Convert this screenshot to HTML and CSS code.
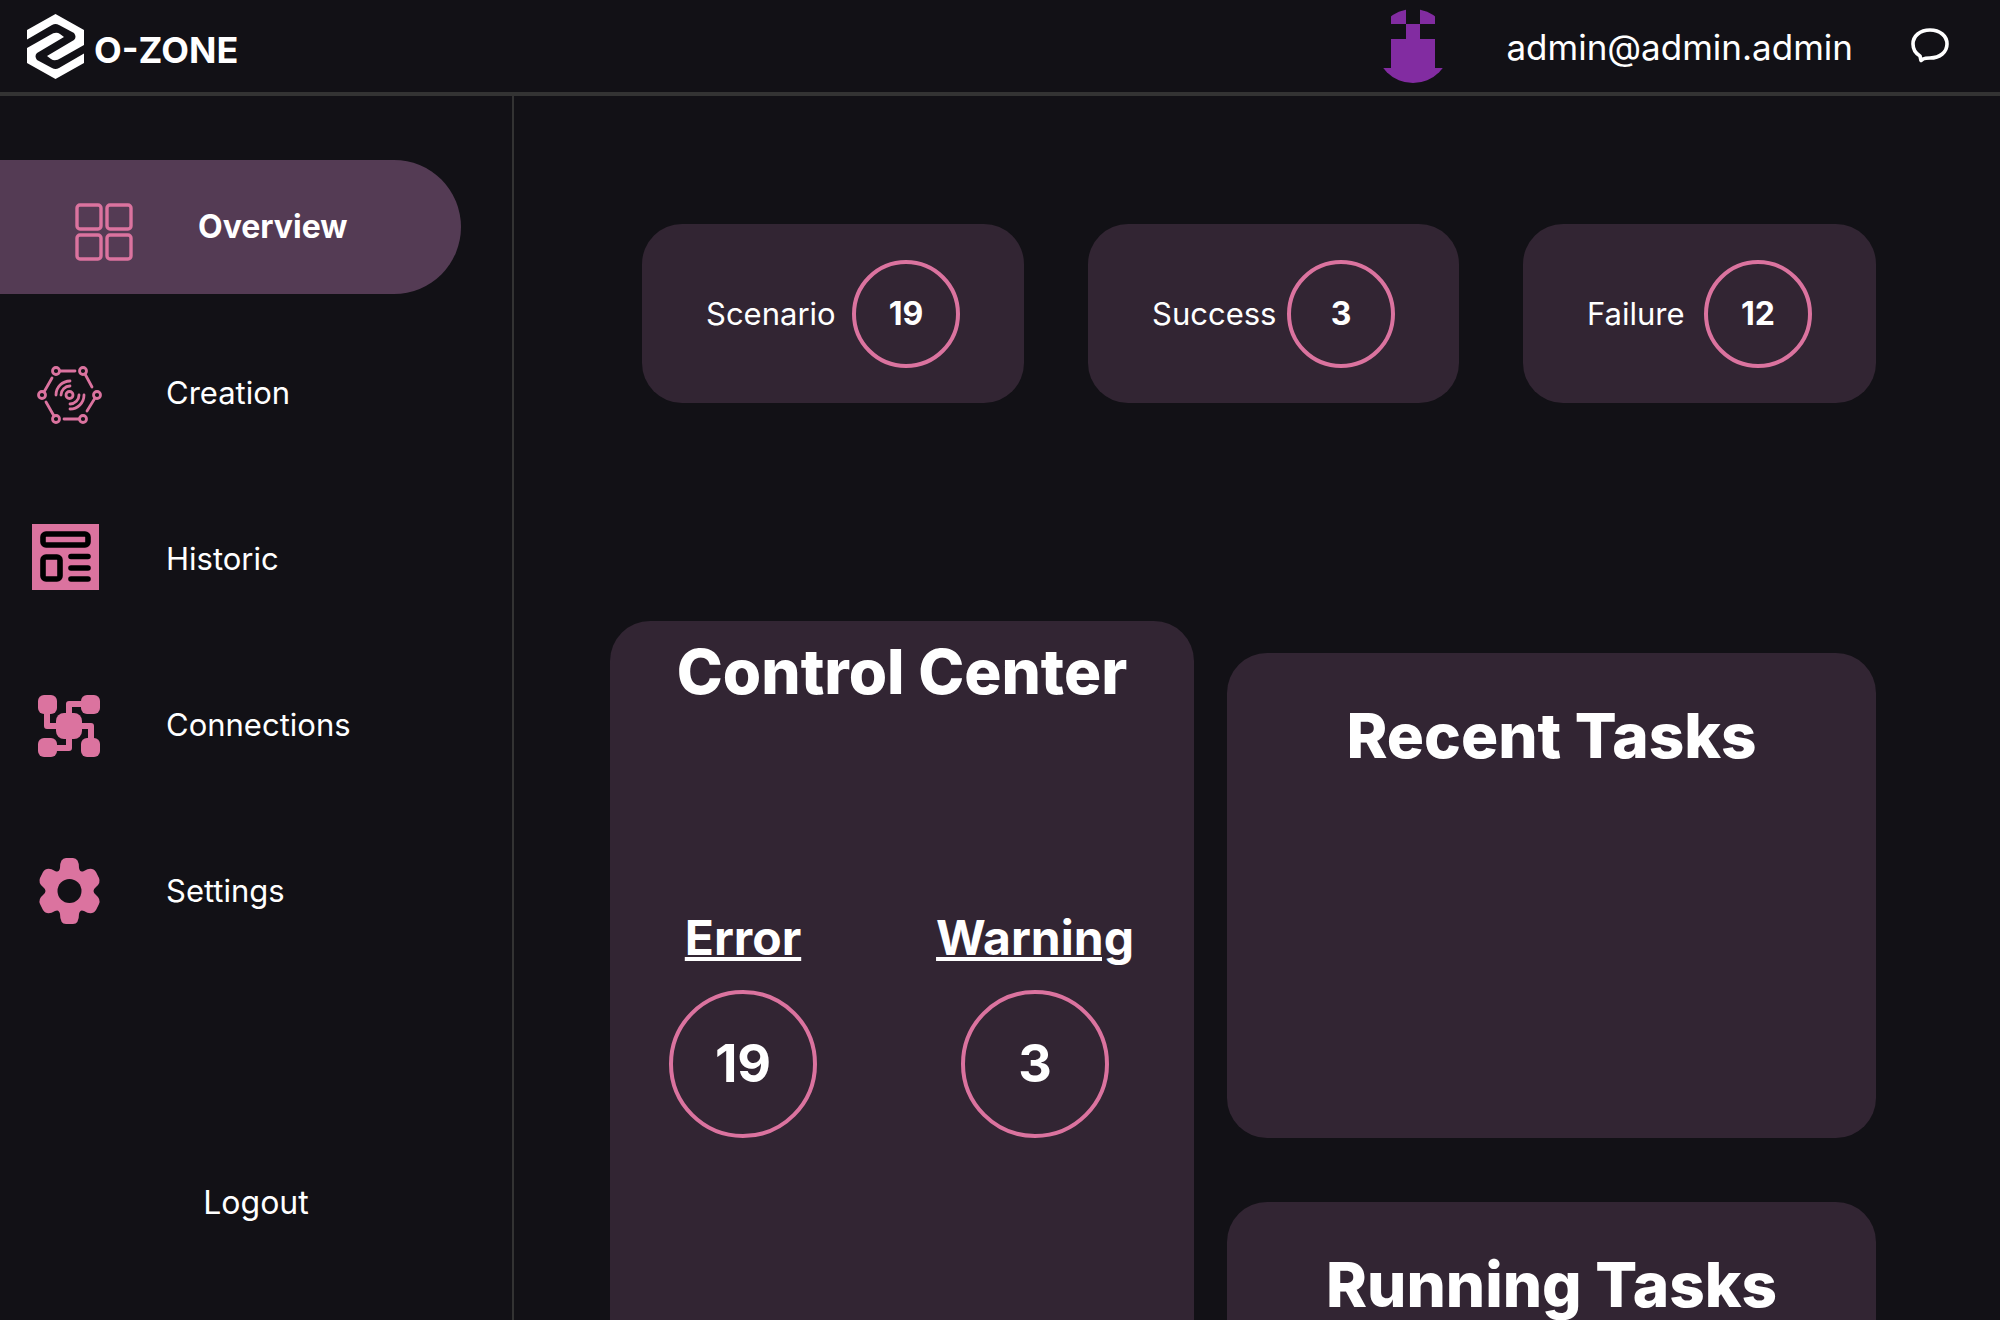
FILE: index.html
```html
<!DOCTYPE html>
<html lang="en">
<head>
<meta charset="utf-8">
<title>O-Zone</title>
<link rel="stylesheet" href="styles.css">
</head>
<body>
<div class="app">
  <header class="topbar">
    <a class="brand" href="#">
      <svg class="brand-mark" viewBox="0 0 57 65" aria-hidden="true">
        <path fill="#fff" d="M0 25.500V16L28.500 0L57 16V31L34 44Q28 48 24 45L20 42L47 26Q50 23 47 19L32 11Q28.500 9 25 11ZM57 39.500V49L28.500 65L0 49V34L23 21Q29 17 33 20L37 23L10 39Q7 42 10 46L25 54Q28.500 56 32 54Z"/>
      </svg>
      <span class="brand-name">O-ZONE</span>
    </a>
    <div class="account">
      <svg class="avatar" viewBox="0 0 74 74" role="img" aria-label="Avatar">
        <clipPath id="round"><circle cx="37" cy="37" r="37"/></clipPath>
        <path clip-path="url(#round)" fill="#822ca1" d="M15 0H30V15H15ZM44 0H59V15H44ZM30 15H44V30H59V59H74V74H0V59H15V30H30Z"/>
      </svg>
      <span class="email">admin@admin.admin</span>
      <button class="chat" type="button" aria-label="Messages">
        <svg viewBox="0 0 38 36" fill="none" stroke="#fff" stroke-width="3.600" stroke-linejoin="round" aria-hidden="true">
          <path d="M9 28C4 25 2 21 2 16C2 8 9 2 19 2S36 8 36 16S29 30 19 30C16 30 14 30 12 31L10 32.500Z"/>
        </svg>
      </button>
    </div>
  </header>
  <div class="body">
    <nav class="sidebar">
      <ul class="menu">
        <li><a class="item active" href="#">
          <svg class="icon" viewBox="0 0 76 70" fill="none" stroke="#db739f" stroke-width="3.400" aria-hidden="true">
            <rect x="13" y="13" width="24" height="24" rx="3"/><rect x="43" y="13" width="24" height="24" rx="3"/><rect x="13" y="43" width="24" height="24" rx="3"/><rect x="43" y="43" width="24" height="24" rx="3"/>
          </svg>Overview</a></li>
        <li><a class="item" href="#">
          <svg class="icon" viewBox="0 0 76 70" fill="none" stroke="#db739f" stroke-width="2.800" stroke-linecap="round" aria-hidden="true">
            <circle cx="24" cy="13" r="3.500"/><circle cx="51" cy="13" r="3.500"/><circle cx="10" cy="37" r="3.500"/><circle cx="65" cy="37" r="3.500"/><circle cx="24" cy="61" r="3.500"/><circle cx="51" cy="61" r="3.500"/><circle cx="37.500" cy="37" r="3.500"/>
            <path d="M28 13H43M53 16L60 29M63 40L55 53M47 61H32M22 58L14 44M12 34L20 20M24 37A14 14 0 0 1 38 23M29 37A9 9 0 0 1 38 28M38 51A14 14 0 0 0 52 37M38 46A9 9 0 0 0 47 37"/>
          </svg>Creation</a></li>
        <li><a class="item" href="#">
          <svg class="icon" viewBox="0 1 76 70" aria-hidden="true">
            <path fill="#db739f" d="M0 1H67V67H0Z"/>
            <g fill="none" stroke="#000" stroke-width="5.600" stroke-linecap="round"><rect x="11" y="11" width="45" height="11" rx="3"/><rect x="11" y="34" width="17" height="22" rx="3"/><path d="M39 33.500H56M39 45H56M39 56H56"/></g>
          </svg>Historic</a></li>
        <li><a class="item" href="#">
          <svg class="icon" viewBox="0 0 76 70" fill="#db739f" aria-hidden="true">
            <rect x="6" y="5" width="19" height="19" rx="6"/><rect x="49" y="5" width="19" height="19" rx="6"/><rect x="6" y="48" width="19" height="19" rx="6"/><rect x="49" y="48" width="19" height="19" rx="6"/><rect x="24" y="23" width="26" height="26" rx="8"/>
            <path fill="none" stroke="#db739f" stroke-width="6" stroke-linejoin="round" d="M15 20V36H30M52 14H37V28M46 36H59V52M22 58H37V44"/>
          </svg>Connections</a></li>
        <li><a class="item" href="#">
          <svg class="icon" viewBox="0 0 76 70" aria-hidden="true">
            <defs><mask id="hub"><path fill="#fff" d="M0 0H76V70H0Z"/><circle cx="37.500" cy="35" r="12"/></mask></defs>
            <path mask="url(#hub)" fill="#db739f" d="M28 12Q28 2 34 2H41Q47 2 47 12Q48 17 52 15Q60 10 64 16L67 22Q69 27 64 31Q59 35 64 39Q69 43 67 48L64 54Q60 60 52 55Q48 53 47 58Q47 68 41 68H34Q28 68 28 58Q27 53 23 55Q15 60 11 54L8 48Q6 43 11 39Q16 35 11 31Q6 27 8 22L11 16Q15 10 23 15Q27 17 28 12Z"/>
          </svg>Settings</a></li>
      </ul>
      <button class="logout" type="button">Logout</button>
    </nav>
    <main class="main">
      <section class="stats">
        <div class="stat"><span>Scenario</span><strong class="ring">19</strong></div>
        <div class="stat"><span>Success</span><strong class="ring">3</strong></div>
        <div class="stat"><span>Failure</span><strong class="ring">12</strong></div>
      </section>
      <div class="panels">
        <section class="panel control">
          <h1 class="title">Control Center</h1>
          <div class="gauges">
            <div class="gauge"><h2 class="subtitle">Error</h2><strong class="ring large">19</strong></div>
            <div class="gauge"><h2 class="subtitle">Warning</h2><strong class="ring large">3</strong></div>
          </div>
        </section>
        <div class="tasks">
          <section class="panel task"><h1 class="title">Recent Tasks</h1></section>
          <section class="panel task"><h1 class="title">Running Tasks</h1></section>
        </div>
      </div>
    </main>
  </div>
</div>
</body>
</html>
```
FILE: styles.css
```css
* { box-sizing: border-box; }
body {
  margin: 0;
  background: #121116;
  color: #fff;
  font: 400 31px/48px Inter, sans-serif;
}
a { color: inherit; text-decoration: none; }
button { padding: 0; border: 0; background: none; color: inherit; font: inherit; cursor: pointer; }
h1, h2, ul { margin: 0; padding: 0; }
ul { list-style: none; }
svg { display: block; flex: none; }

.app { display: flex; flex-direction: column; height: 100vh; overflow: hidden; }
.topbar {
  display: flex;
  flex: none;
  align-items: center;
  justify-content: space-between;
  height: 96px;
  padding: 0 51px 0 27px;
  border-bottom: 4px solid #333;
}
.brand { display: flex; align-items: center; gap: 10px; }
.brand-mark { width: 57px; height: 65px; }
.brand-name { padding-top: 8px; font-size: 36px; font-weight: 700; }
.account { display: flex; align-items: center; }
.avatar { width: 74px; height: 74px; margin-right: 56px; }
.email { margin-right: 58px; padding-top: 2px; font-size: 35px; }
.chat svg { width: 38px; height: 36px; }

.body { display: flex; flex: 1; min-height: 0; }
.sidebar {
  display: flex;
  flex: none;
  flex-direction: column;
  align-items: center;
  width: 514px;
  padding-top: 64px;
  border-right: 2px solid #333;
}
.menu { display: grid; gap: 32px; width: 100%; margin-bottom: 221px; }
.item { display: flex; align-items: center; gap: 58px; padding: 32px; }
.item.active {
  margin-right: 51px;
  padding: 32px 64px;
  border-radius: 0 67px 67px 0;
  background: #543b54;
  font-size: 32px;
  font-weight: 700;
}
.icon { width: 76px; height: 70px; }
.logout { font-size: 32px; }

.main { flex: 1; min-width: 0; padding: 128px 124px 0 96px; }
.stats {
  display: grid;
  grid-template-columns: 382fr 371fr 353fr;
  gap: 64px;
  margin: 0 0 218px 32px;
}
.stat {
  display: flex;
  align-items: center;
  justify-content: space-between;
  padding: 36px 64px 35px;
  border-radius: 40px;
  background: #322533;
}
.ring {
  display: grid;
  flex: none;
  place-items: center;
  width: 108px;
  height: 108px;
  border: 4px solid #db739f;
  border-radius: 50%;
  font-size: 32px;
}
.ring.large { width: 148px; height: 148px; font-size: 52px; }

.panels { display: grid; grid-template-columns: 584fr 649fr; gap: 33px; }
.panel { border-radius: 40px; background: #322533; text-align: center; }
.control { padding-bottom: 400px; }
.title { font-size: 62px; line-height: 102px; font-weight: 800; }
.gauges { display: flex; justify-content: space-between; padding: 179px 85px 0 59px; }
.gauge { display: flex; flex-direction: column; align-items: center; width: 148px; }
.subtitle {
  margin-bottom: 16px;
  font-size: 48px;
  line-height: 72px;
  text-decoration: underline;
  text-decoration-thickness: 4px;
}
.tasks { display: flex; flex-direction: column; gap: 64px; padding-top: 32px; }
.task { min-height: 485px; padding: 32px; }
```
